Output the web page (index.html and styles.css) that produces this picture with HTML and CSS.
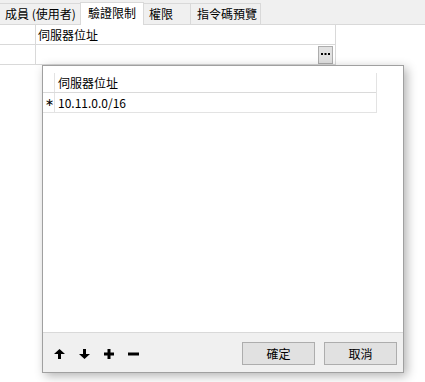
FILE: index.html
```html
<!DOCTYPE html>
<html lang="zh-Hant">
<head>
  <meta charset="UTF-8" />
  <title>驗證限制</title>
  <link rel="stylesheet" href="styles.css">
</head>
<body>
  <div class="tabs">
    <div class="tab tab-members">成員 (使用者)</div>
    <div class="tab tab-auth active">驗證限制</div>
    <div class="tab tab-perm">權限</div>
    <div class="tab tab-script">指令碼預覽</div>
  </div>

  <div class="grid">
    <div class="grid-row">
      <div class="cell-head"></div>
      <div class="cell">伺服器位址</div>
    </div>
    <div class="grid-row">
      <div class="cell-head"></div>
      <div class="cell cell-edit">
        <button class="btn-dots">
          <svg width="9" height="2" viewBox="0 0 9 2"><rect x="0" y="0" width="2" height="2" fill="#000"/><rect x="3.5" y="0" width="2" height="2" fill="#000"/><rect x="7" y="0" width="2" height="2" fill="#000"/></svg>
        </button>
      </div>
    </div>
  </div>

  <div class="dialog">
    <div class="dialog-body">
      <div class="list">
        <div class="list-row">
          <div class="list-head"></div>
          <div class="list-cell">伺服器位址</div>
        </div>
        <div class="list-row">
          <div class="list-head">∗</div>
          <div class="list-cell">10.11.0.0/16</div>
        </div>
      </div>
    </div>
    <div class="dialog-footer">
      <div class="tools">
        <svg width="11" height="10" viewBox="0 0 11 10"><path d="M5.5 0 L11 5 L7 5 L7 10 L4 10 L4 5 L0 5 Z" fill="#000"/></svg>
        <svg width="11" height="10" viewBox="0 0 11 10"><path d="M5.5 10 L11 5 L7 5 L7 0 L4 0 L4 5 L0 5 Z" fill="#000"/></svg>
        <svg width="10" height="10" viewBox="0 0 10 10"><path d="M3.5 0 H6.5 V3.5 H10 V6.5 H6.5 V10 H3.5 V6.5 H0 V3.5 H3.5 Z" fill="#000"/></svg>
        <svg width="11" height="10" viewBox="0 0 11 10"><rect x="0" y="3.5" width="11" height="3" fill="#000"/></svg>
      </div>
      <div class="buttons">
        <button class="btn">確定</button>
        <button class="btn">取消</button>
      </div>
    </div>
  </div>
</body>
</html>
```

FILE: styles.css
```css
* { box-sizing: border-box; }

body {
  margin: 0;
  background: #fff;
  font-family: "Noto Sans CJK TC", "Noto Sans", sans-serif;
  font-size: 12px;
  color: #000;
  width: 425px;
  height: 382px;
  overflow: hidden;
  position: relative;
}

.tabs {
  height: 25px;
  background: #f0f0f0;
  display: flex;
  align-items: flex-end;
  border-bottom: 1px solid #d9d9d9;
}

.tab {
  height: 21px;
  line-height: 19px;
  border: 1px solid #d9d9d9;
  border-bottom: none;
  margin-left: -1px;
  white-space: nowrap;
}

.tab.active {
  height: 23px;
  line-height: 19px;
  background: #fff;
  margin-bottom: -1px;
  position: relative;
  z-index: 1;
}

.tab-members { width: 82px; padding-left: 5px; margin-left: -1px; }
.tab-auth { width: 64px; padding-left: 7px; }
.tab-perm { width: 48px; padding-left: 5px; }
.tab-script { width: 71px; padding-left: 6px; }

.grid {
  width: 336px;
  border-right: 1px solid #d9d9d9;
}

.grid-row {
  display: flex;
  height: 20px;
  border-bottom: 1px solid #d9d9d9;
}

.cell-head {
  width: 36px;
  border-right: 1px solid #d9d9d9;
}

.cell {
  flex: 1;
  padding-left: 2px;
  line-height: 19px;
}

.cell-edit {
  display: flex;
  justify-content: flex-end;
  align-items: flex-start;
  padding: 1px 2px 0 0;
}

.btn-dots {
  width: 15px;
  height: 18px;
  margin: 0;
  padding: 0 0 2px;
  background: #e1e1e1;
  border: 1px solid #adadad;
  display: flex;
  align-items: center;
  justify-content: center;
}

.dialog {
  position: absolute;
  left: 42px;
  top: 65px;
  width: 362px;
  height: 308px;
  border: 1px solid #a0a0a0;
  background: #fff;
  box-shadow: 3px 3px 10px rgba(0, 0, 0, 0.3);
  display: flex;
  flex-direction: column;
}

.dialog-body {
  flex: 1;
  padding-top: 7px;
}

.list {
  width: 334px;
  border-right: 1px solid #e3e3e3;
}

.list-row {
  display: flex;
  height: 20px;
  border-bottom: 1px solid #e3e3e3;
}

.list-row:first-child { border-bottom-color: #dadada; }

.list-head {
  width: 12px;
  border-right: 1px solid #e3e3e3;
  font-family: "DejaVu Sans", sans-serif;
  font-size: 11px;
  line-height: 19px;
  padding-left: 2px;
}

.list-cell {
  flex: 1;
  padding-left: 3px;
  line-height: 19px;
}

.dialog-footer {
  height: 40px;
  background: #f0f0f0;
  border-top: 1px solid #d9d9d9;
  display: flex;
  align-items: center;
  justify-content: space-between;
  padding: 0 6px 0 11px;
}

.tools {
  display: flex;
  align-items: center;
  gap: 14px;
  padding-top: 3px;
}

.buttons {
  display: flex;
  gap: 9px;
  padding-top: 1px;
}

.btn {
  width: 73px;
  height: 23px;
  margin: 0;
  padding: 0;
  background: #e1e1e1;
  border: 1px solid #adadad;
  font-family: "Noto Sans CJK TC", sans-serif;
  font-size: 12px;
  color: #000;
}
```
